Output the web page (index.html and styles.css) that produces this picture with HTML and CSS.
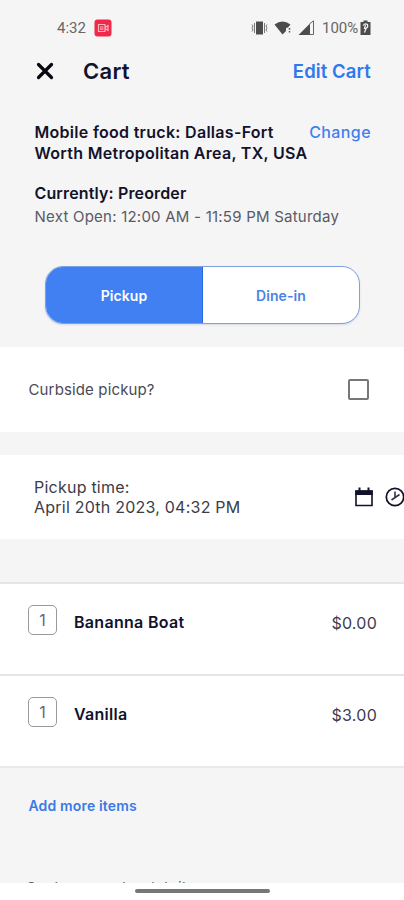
FILE: index.html
```html
<!DOCTYPE html>
<html lang="en">
<head>
<meta charset="utf-8">
<title>Cart</title>
<link rel="stylesheet" href="styles.css">
</head>
<body>
<div class="status">
  <span class="clock">4:32</span>
  <svg class="rec" width="18" height="18" viewBox="0 0 18 18"><rect x=".5" y=".5" width="17" height="17" rx="3" fill="#f02849"/><path d="M4.500 5.500h6.500v7H4.500zM11 8.500l3-2v5l-3-2M6 8h3.500M6 10.200h3.500" fill="none" stroke="#ffb4c0" stroke-width="1.200"/></svg>
  <svg class="vibrate" width="17" height="16" viewBox="0 0 17 16"><path d="M5 1.500h7v13H5z" fill="#4c4c4c"/><path d="M3.500 3v10M13.500 3v10M1 4.500l1 1.500-1 2 1 2-1 1.500M16 4.500l-1 1.500 1 2-1 2 1 1.500" fill="none" stroke="#777" stroke-width="1"/></svg>
  <svg class="wifi" width="18" height="16" viewBox="0 0 18 16"><path d="M.5 4.500Q8.500-1.500 16.500 4.500L14 7.500l-2 .5v3l-3.500 3.500z" fill="#4c4c4c"/><path d="M15.500 8v1.800M15.500 11v1.600" stroke="#555" stroke-width="1.500"/></svg>
  <svg class="signal" width="17" height="16" viewBox="0 0 17 16"><path d="M.5 15L12 3.500V15z" fill="#4c4c4c"/><path d="M11.500 4L15.500 .8V14.500H11.500" fill="none" stroke="#666"/></svg>
  <span class="percent">100%</span>
  <svg class="battery" width="11" height="16" viewBox="0 0 11 16"><path d="M3.500 .5h4V2H10.500v13H.5V2h3z" fill="#4c4c4c"/><path d="M3 5.500Q5 3 7.500 4.500Q8.500 7 6 8.500L4.500 12.500M5.500 5L4.500 8.500H6.500" fill="none" stroke="#f5f5f5" stroke-width="1.200"/></svg>
</div>
<header class="bar">
  <svg class="close" width="18" height="18" viewBox="0 0 18 18"><path d="M2.500 2.500l13 13M15.500 2.500l-13 13" stroke="#07070f" stroke-width="3.200" stroke-linecap="round"/></svg>
  <h1 class="title">Cart</h1>
  <a class="edit">Edit Cart</a>
</header>
<section class="store">
  <div class="store-row">
    <p class="store-name">Mobile food truck: Dallas-Fort<br>Worth Metropolitan Area, TX, USA</p>
    <a class="change">Change</a>
  </div>
  <p class="state">Currently: Preorder</p>
  <p class="next">Next Open: 12:00 AM - 11:59 PM Saturday</p>
</section>
<div class="tabs">
  <div class="tab active">Pickup</div>
  <div class="tab">Dine-in</div>
</div>
<section class="curbside">
  <span class="curb-label">Curbside pickup?</span>
  <span class="check"></span>
</section>
<section class="time">
  <p class="time-text">Pickup time:<br>April 20th 2023, 04:32 PM</p>
  <svg class="calendar" width="20" height="20" viewBox="0 0 20 20"><path d="M2 4h16v14.500H2z" fill="none" stroke="#11112b" stroke-width="1.600"/><path d="M1.200 3.500h17.600v4.500H1.200z" fill="#11112b"/><path d="M5.500 .5v4M14.500 .5v4" stroke="#11112b" stroke-width="2"/></svg>
  <svg class="history" width="20" height="20" viewBox="0 0 20 20"><circle cx="10" cy="10" r="8.700" fill="none" stroke="#11112b" stroke-width="1.700"/><path d="M10 4.500V10M14.500 7.500L6.500 13" fill="none" stroke="#33334b" stroke-width="1.600"/></svg>
</section>
<section class="items">
  <div class="item"><span class="qty">1</span><span class="item-name">Bananna Boat</span><span class="price">$0.00</span></div>
  <div class="item"><span class="qty">1</span><span class="item-name">Vanilla</span><span class="price">$3.00</span></div>
</section>
<section class="more">
  <a class="add">Add more items</a>
  <div class="peek">Customer order details</div>
</section>
<footer class="nav"><div class="handle"></div></footer>
</body>
</html>
```
FILE: styles.css
```css
* { box-sizing: border-box; }
body { margin: 0; width: 404px; height: 900px; overflow: hidden; background: #f5f5f5; font-family: Inter, sans-serif; color: #12122b; display: flex; flex-direction: column; }
p, h1 { margin: 0; }
svg { flex: none; display: block; }
span, a, p, .tab { white-space: nowrap; }
.status { height: 44px; padding: 12px 0 0 57px; display: flex; align-items: center; font-family: Roboto, sans-serif; font-size: 15px; color: #666; flex: none; }
.clock { width: 37px; }
.vibrate { margin-left: 139px; }
.wifi { margin-left: 6px; }
.signal { margin-left: 6px; }
.percent { width: 38px; margin-left: 7px; }
.bar { height: 54px; display: flex; align-items: center; padding-left: 36px; flex: none; }
.title { font-size: 22px; font-weight: 600; letter-spacing: .3px; margin-left: 29px; }
.edit { margin: 0 33px 0 auto; font-size: 18.500px; font-weight: 600; letter-spacing: .1px; color: #2f78ee; }
.store { height: 168px; padding: 24px 33px 0 34.500px; flex: none; }
.store-row { display: flex; justify-content: space-between; height: 61px; }
.store-name { font-size: 16px; line-height: 20.500px; font-weight: 600; letter-spacing: .29px; width: 272px; }
.change { font-size: 16px; line-height: 20px; font-weight: 500; letter-spacing: .4px; color: #4080f0; }
.state { font-size: 16px; line-height: 21px; font-weight: 600; letter-spacing: .14px; }
.next { font-size: 15px; line-height: 25px; letter-spacing: .23px; color: #5a5a66; }
.tabs { margin: 0 44px 23px 45px; height: 58px; flex: none; border: 1px solid #7da0df; border-radius: 18px; background: #fff; display: flex; overflow: hidden; box-shadow: 0 1px 2px #d3dbea; }
.tab { flex: 1; display: flex; align-items: center; justify-content: center; font-size: 14px; font-weight: 600; letter-spacing: .1px; color: #4a83e2; }
.active { background: #4080f2; color: #fff; border-right: 1px solid #2468df; }
.curbside { height: 85px; background: #fff; padding: 0 35px 0 28.500px; display: flex; align-items: center; justify-content: space-between; font-size: 15px; letter-spacing: .14px; color: #4a4a55; flex: none; }
.check { width: 21px; height: 21px; border: 2px solid #777; border-radius: 2px; }
.time { height: 84px; margin-top: 23px; background: #fff; padding: 0 0 1px 34px; display: flex; align-items: center; flex: none; overflow: hidden; }
.time-text { width: 320px; flex: none; font-size: 16px; line-height: 20px; letter-spacing: .23px; color: #3c3c48; }
.history { margin-left: 11px; }
.items { margin-top: 43px; background: #fff; flex: none; }
.item { height: 92px; border-top: 2px solid #e5e5e5; padding: 21px 27px 0 28px; display: flex; align-items: flex-start; }
.qty { width: 29px; height: 30px; border: 1px solid #999; border-radius: 5px; font-size: 16px; line-height: 28px; text-align: center; color: #66667a; }
.item-name { margin-left: 17px; font-size: 16px; line-height: 34px; font-weight: 600; letter-spacing: .3px; }
.price { margin-left: auto; font-size: 16px; line-height: 37px; letter-spacing: .25px; color: #3c3c50; }
.more { height: 117px; flex: none; border-top: 2px solid #e9e9e9; padding: 27px 0 0 28.500px; overflow: hidden; }
.add { display: block; height: 75px; font-size: 14px; line-height: 22px; font-weight: 600; letter-spacing: .15px; color: #3a7ae6; }
.peek { margin-left: -3px; font-size: 15px; line-height: 36px; letter-spacing: .3px; color: #666; }
.nav { flex: 1; background: #fff; display: flex; justify-content: center; padding-top: 6px; }
.handle { width: 135px; height: 4px; border-radius: 2px; background: #777; }
```
